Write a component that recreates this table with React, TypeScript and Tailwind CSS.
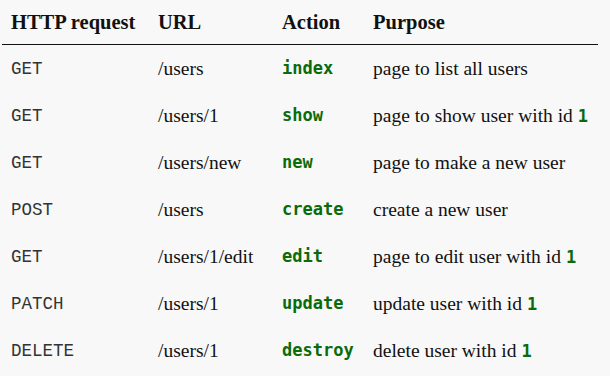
const rows = [
  { method: "GET", url: "/users", action: "index", purpose: "page to list all users", id: false },
  { method: "GET", url: "/users/1", action: "show", purpose: "page to show user with id", id: true },
  { method: "GET", url: "/users/new", action: "new", purpose: "page to make a new user", id: false },
  { method: "POST", url: "/users", action: "create", purpose: "create a new user", id: false },
  { method: "GET", url: "/users/1/edit", action: "edit", purpose: "page to edit user with id", id: true },
  { method: "PATCH", url: "/users/1", action: "update", purpose: "update user with id", id: true },
  { method: "DELETE", url: "/users/1", action: "destroy", purpose: "delete user with id", id: true },
];

const serif = "font-['Georgia','Liberation_Serif',serif]";
const mono = "font-['Courier_New','Liberation_Mono',monospace]";
const code = "font-['DejaVu_Sans_Mono',monospace] font-bold text-[#0a6b0a]";

export default function App() {
  return (
    <main className="w-[610px] h-[376px] bg-[#f8f8f8] overflow-hidden">
      <div className="ml-[2px] w-[596px]">
        <div className={`grid grid-cols-[147px_124px_91px_1fr] h-[45px] items-center border-b-[1.5px] border-[#111] text-[20.5px] font-bold text-[#111] ${serif}`}>
          <div className="pl-[9px] pt-[1px]">HTTP request</div>
          <div className="pl-[9px] pt-[1px]">URL</div>
          <div className="pl-[9px] pt-[1px]">Action</div>
          <div className="pl-[9px] pt-[1px]">Purpose</div>
        </div>
        {rows.map((r) => (
          <div key={r.action} className="grid grid-cols-[147px_124px_91px_1fr] h-[47px] items-center text-[#111]">
            <div className={`pl-[9px] pt-[2px] text-[17.5px] text-[#333] ${mono}`}>{r.method}</div>
            <div className={`pl-[9px] text-[19.5px] ${serif}`}>{r.url}</div>
            <div className={`pl-[9px] pt-[1px] text-[17px] ${code}`}>{r.action}</div>
            <div className={`pl-[9px] text-[19.5px] ${serif}`}>
              {r.purpose}
              {r.id && <span className={`ml-[5px] text-[17px] ${code}`}>1</span>}
            </div>
          </div>
        ))}
      </div>
    </main>
  );
}
